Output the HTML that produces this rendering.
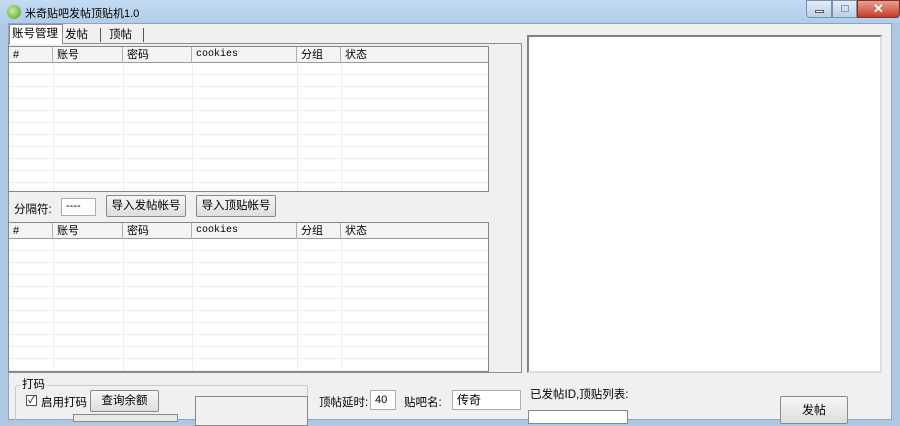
<!DOCTYPE html><html><head><meta charset="utf-8"><style>
*{margin:0;padding:0;box-sizing:border-box}
body{width:900px;height:420px;overflow:hidden;background:#aec8e4;font-family:"Liberation Sans","Noto Sans CJK SC",sans-serif;font-size:12px;color:#000;position:relative;white-space:nowrap}
.a{position:absolute}
.client{left:8px;top:23px;width:884px;height:397px;background:#f0f0f0;border:1px solid #8aa4c4}
.lv{background:#fff;border:1px solid #828790;overflow:hidden}
.hd{position:absolute;top:0;left:0;right:0;height:16px;background:#f4f4f4;border-bottom:1px solid #9a9a9a;z-index:2}
.hd span{position:absolute;top:0;height:16px;border-right:1px solid #b0b0b0;padding-left:4px;font-size:11px;line-height:16px}
.vl{position:absolute;top:16px;bottom:0;width:1px;background:#eee}
.btn{background:linear-gradient(#f6f6f6,#dedede);border:1px solid #8a8a8a;border-radius:2px;text-align:center;line-height:20px;font-size:12px}
.inp{background:#fff;border:1px solid #abadb3;font-size:11px;padding-left:4px}
</style></head><body>
<div class="a" style="left:0;top:0;width:900px;height:23px;background:linear-gradient(#c4dbf2,#b2cde9)"></div>
<div class="a" style="left:7px;top:5px;width:14px;height:14px;border-radius:50%;background:radial-gradient(circle at 40% 40%,#c8f0a0,#4a9a20)"></div>
<div class="a" style="left:25px;top:5px;font-size:11px">米奇贴吧发帖顶贴机1.0</div>
<div class="a" style="left:806px;top:0;width:26px;height:18px;border:1px solid #7890b0;border-radius:0 0 0 4px;background:linear-gradient(#e2ecf8,#bcd0e8)"><div class="a" style="left:8px;top:9px;width:9px;height:3px;background:#fff;border:1px solid #556"></div></div>
<div class="a" style="left:832px;top:0;width:25px;height:18px;border:1px solid #7890b0;background:linear-gradient(#e2ecf8,#bcd0e8)"><div class="a" style="left:8px;top:4px;width:8px;height:7px;border:1px solid #99a"></div></div>
<div class="a" style="left:857px;top:0;width:43px;height:18px;border:1px solid #803020;border-radius:0 0 4px 0;background:linear-gradient(#e8a090,#c83c28);color:#fff;font-weight:bold;text-align:center;line-height:16px;font-size:13px">✕</div>
<div class="a client"></div>
<div class="a" style="left:8px;top:43px;width:514px;height:330px;border:1px solid #898c95;background:#f0f0f0"></div>
<div class="a" style="left:9px;top:24px;width:54px;height:20px;background:#fff;border:1px solid #898c95;border-bottom:none;padding-left:2px;line-height:19px;font-size:11.5px">账号管理</div>
<div class="a" style="left:65px;top:28px;line-height:14px;width:36px;border-right:1px solid #555;font-size:11.5px">发帖</div>
<div class="a" style="left:107px;top:28px;line-height:14px;width:37px;border-right:1px solid #555;padding-left:2px;font-size:11.5px">顶帖</div>
<div class="a lv" style="left:8px;top:46px;width:481px;height:146px">
<div class="hd"><span style="left:0;width:44px">#</span><span style="left:44px;width:70px">账号</span><span style="left:114px;width:69px">密码</span><span style="left:183px;width:105px;font-family:'Liberation Mono',monospace;font-size:10px">cookies</span><span style="left:288px;width:44px">分组</span><span style="left:332px;width:147px;border:none">状态</span></div>
<div class="a" style="left:0;right:0;top:16px;bottom:0;background:repeating-linear-gradient(#fff 0 11px,#eee 11px 12px)"></div>
<div class="vl" style="left:44px"></div><div class="vl" style="left:114px"></div><div class="vl" style="left:183px"></div><div class="vl" style="left:288px"></div><div class="vl" style="left:332px"></div>
</div>
<div class="a" style="left:14px;top:201px;font-size:11.5px">分隔符:</div>
<div class="a inp" style="left:61px;top:198px;width:35px;height:18px;line-height:15px">----</div>
<div class="a btn" style="left:106px;top:195px;width:80px;height:22px;font-size:11.5px">导入发帖帐号</div>
<div class="a btn" style="left:196px;top:195px;width:80px;height:22px;font-size:11.5px">导入顶贴帐号</div>
<div class="a lv" style="left:8px;top:222px;width:481px;height:150px">
<div class="hd"><span style="left:0;width:44px">#</span><span style="left:44px;width:70px">账号</span><span style="left:114px;width:69px">密码</span><span style="left:183px;width:105px;font-family:'Liberation Mono',monospace;font-size:10px">cookies</span><span style="left:288px;width:44px">分组</span><span style="left:332px;width:147px;border:none">状态</span></div>
<div class="a" style="left:0;right:0;top:16px;bottom:0;background:repeating-linear-gradient(#fff 0 11px,#eee 11px 12px)"></div>
<div class="vl" style="left:44px"></div><div class="vl" style="left:114px"></div><div class="vl" style="left:183px"></div><div class="vl" style="left:288px"></div><div class="vl" style="left:332px"></div>
</div>
<div class="a" style="left:527px;top:35px;width:355px;height:338px;background:#fff;border:2px solid #828282;border-right-color:#ddd;border-bottom-color:#ddd"></div>
<div class="a" style="left:15px;top:385px;width:293px;height:40px;border:1px solid #c8c8c8;border-radius:3px"></div>
<div class="a" style="left:20px;top:376px;background:#f0f0f0;padding:0 2px;font-size:11.5px">打码</div>
<div class="a" style="left:26px;top:395px;width:11px;height:11px;border:1px solid #555;background:#fff;font-size:10px;line-height:9px;text-align:center">✓</div>
<div class="a" style="left:41px;top:394px;font-size:11.5px">启用打码</div>
<div class="a btn" style="left:90px;top:390px;width:69px;height:22px;font-size:11.5px">查询余额</div>
<div class="a" style="left:73px;top:414px;width:105px;height:8px;border:1px solid #8a8a8a;background:#e8e8e8"></div>
<div class="a" style="left:195px;top:396px;width:113px;height:30px;border:1px solid #888;background:#f0f0f0"></div>
<div class="a" style="left:319px;top:394px;font-size:11.5px">顶帖延时:</div>
<div class="a inp" style="left:370px;top:390px;width:26px;height:20px;line-height:18px">40</div>
<div class="a" style="left:404px;top:394px;font-size:11.5px">贴吧名:</div>
<div class="a inp" style="left:452px;top:390px;width:69px;height:20px;line-height:18px;font-size:12px">传奇</div>
<div class="a" style="left:530px;top:386px;font-size:11.5px">已发帖ID,顶贴列表:</div>
<div class="a" style="left:528px;top:410px;width:100px;height:14px;border:1px solid #888;background:#fff"></div>
<div class="a btn" style="left:780px;top:396px;width:68px;height:28px;line-height:26px">发帖</div>
</body></html>
